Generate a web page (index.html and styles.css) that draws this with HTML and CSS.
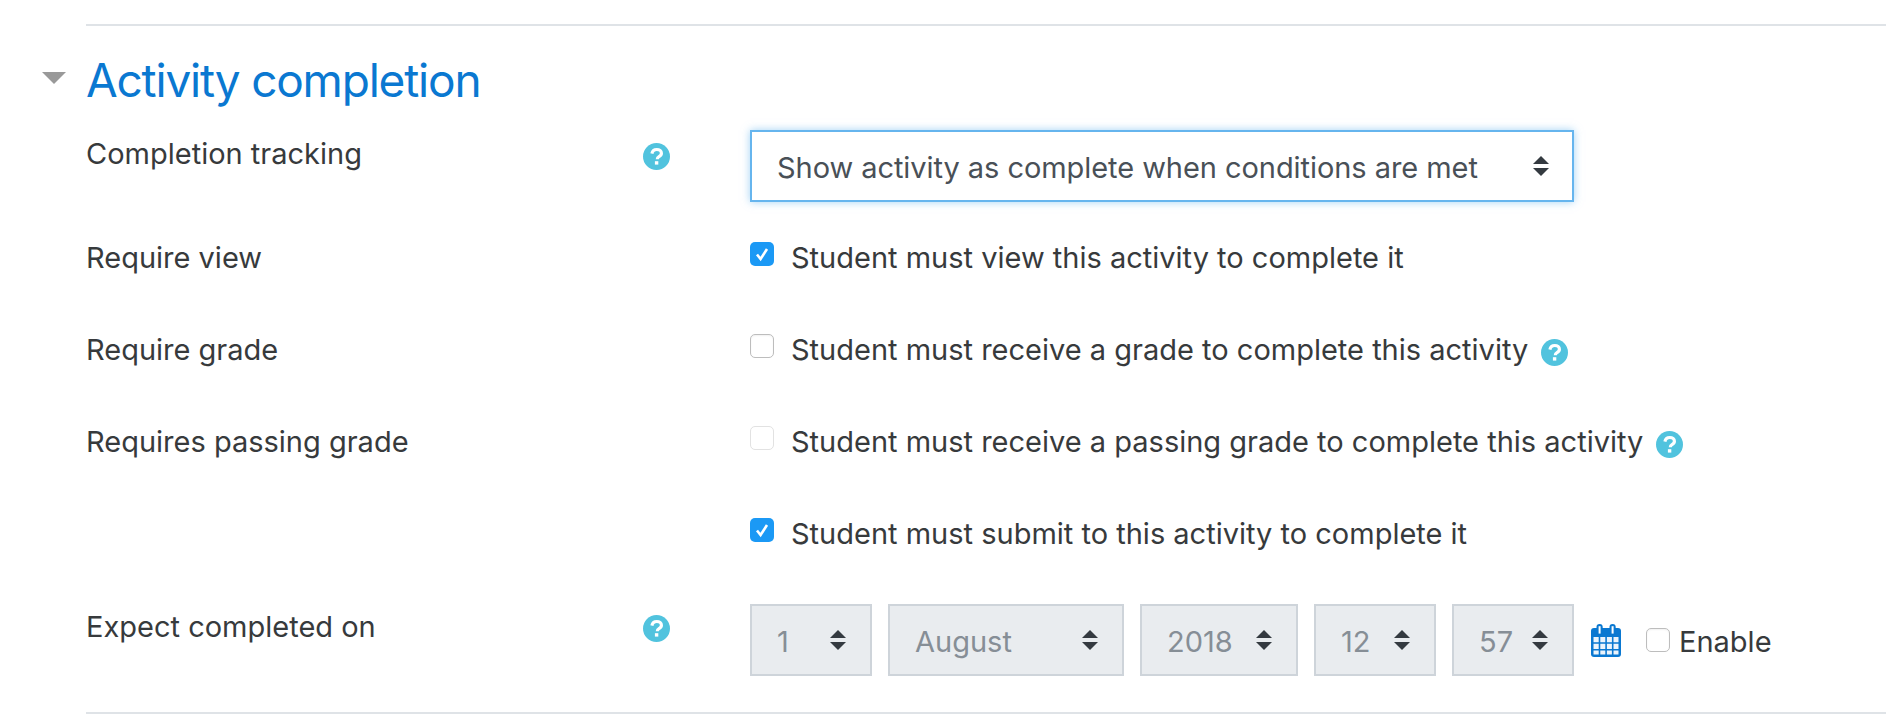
FILE: index.html
```html
<!DOCTYPE html>
<html lang="en">
<head>
<meta charset="utf-8">
<title>Activity completion</title>
<link rel="stylesheet" href="styles.css">
</head>
<body>
<svg class="defs" width="0" height="0" aria-hidden="true">
  <defs>
    <symbol id="help" viewBox="0 0 27 27">
      <circle cx="13.5" cy="13.5" r="13.5" fill="#51c3de"/>
      <path d="M8.9 10.6c.5-2.6 2.3-4.1 4.9-4.1 2.7 0 4.6 1.6 4.6 3.7 0 1.7-1 2.6-2.4 3.4-1.2.7-1.7 1.3-1.7 2.6" fill="none" stroke="#fff" stroke-width="3.2"/>
      <rect x="11.9" y="18.2" width="3.4" height="3.4" fill="#fff"/>
    </symbol>
    <symbol id="updown" viewBox="0 0 16 20">
      <path d="M8 0l8 8H0zM0 12h16l-8 8z" fill="#343a40"/>
    </symbol>
  </defs>
</svg>
<main class="page">
  <hr class="rule">
  <header class="section-head">
    <svg class="caret" viewBox="0 0 24 12" aria-hidden="true"><path d="M0 0h24L12 12z" fill="#999"/></svg>
    <h3 class="section-title">Activity completion</h3>
  </header>

  <div class="row row-select">
    <span class="label">Completion tracking</span>
    <span class="help-cell"><svg class="help"><use href="#help"/></svg></span>
    <div class="select select-focus">
      <span class="select-text">Show activity as complete when conditions are met</span>
      <svg class="updown"><use href="#updown"/></svg>
    </div>
  </div>

  <div class="row row-check">
    <span class="label">Require view</span>
    <span class="help-cell"></span>
    <label class="check-line">
      <span class="check check-on"><svg viewBox="0 0 24 24"><path d="M7 12.5l3.6 4.5L17 7" fill="none" stroke="#fff" stroke-width="2.6"/></svg></span>
      <span class="check-text">Student must view this activity to complete it</span>
    </label>
  </div>

  <div class="row row-check">
    <span class="label">Require grade</span>
    <span class="help-cell"></span>
    <label class="check-line">
      <span class="check"></span>
      <span class="check-text">Student must receive a grade to complete this activity</span>
      <svg class="help help-inline"><use href="#help"/></svg>
    </label>
  </div>

  <div class="row row-check">
    <span class="label">Requires passing grade</span>
    <span class="help-cell"></span>
    <label class="check-line">
      <span class="check check-disabled"></span>
      <span class="check-text">Student must receive a passing grade to complete this activity</span>
      <svg class="help help-inline"><use href="#help"/></svg>
    </label>
  </div>

  <div class="row row-check row-last-check">
    <span class="label"></span>
    <span class="help-cell"></span>
    <label class="check-line">
      <span class="check check-on"><svg viewBox="0 0 24 24"><path d="M7 12.5l3.6 4.5L17 7" fill="none" stroke="#fff" stroke-width="2.6"/></svg></span>
      <span class="check-text">Student must submit to this activity to complete it</span>
    </label>
  </div>

  <div class="row row-date">
    <span class="label">Expect completed on</span>
    <span class="help-cell"><svg class="help"><use href="#help"/></svg></span>
    <div class="date-controls">
      <div class="select select-disabled w-small"><span class="select-text">1</span><svg class="updown"><use href="#updown"/></svg></div>
      <div class="select select-disabled w-month"><span class="select-text">August</span><svg class="updown"><use href="#updown"/></svg></div>
      <div class="select select-disabled w-year"><span class="select-text">2018</span><svg class="updown"><use href="#updown"/></svg></div>
      <div class="select select-disabled w-small"><span class="select-text">12</span><svg class="updown"><use href="#updown"/></svg></div>
      <div class="select select-disabled w-small"><span class="select-text">57</span><svg class="updown"><use href="#updown"/></svg></div>
      <svg class="calendar" viewBox="0 0 30 33" aria-hidden="true">
        <path d="M3 4h24a3 3 0 0 1 3 3v23a3 3 0 0 1-3 3H3a3 3 0 0 1-3-3V7a3 3 0 0 1 3-3z" fill="#0a78d1"/>
        <rect x="5.5" y="0" width="6.2" height="11" rx="3" fill="#0a78d1"/>
        <rect x="18.5" y="0" width="6.2" height="11" rx="3" fill="#0a78d1"/>
        <rect x="7.6" y="2.2" width="2" height="7.4" fill="#fff"/>
        <rect x="20.6" y="2.2" width="2" height="7.4" fill="#fff"/>
        <path d="M2.5 13h5.2v5.2H2.5zM9.3 13h5v5.2h-5zM15.9 13h5v5.2h-5zM22.5 13h5v5.2h-5zM2.5 19.8h5.2V25H2.5zM9.3 19.8h5V25h-5zM15.9 19.8h5V25h-5zM22.5 19.8h5V25h-5zM2.5 26.6h5.2v4H2.5zM9.3 26.6h5v4h-5zM15.9 26.6h5v4h-5zM22.5 26.6h5v4h-5z" fill="#fff" fill-opacity=".92"/>
      </svg>
      <label class="enable">
        <span class="check"></span>
        <span class="check-text">Enable</span>
      </label>
    </div>
  </div>
  <hr class="rule rule-bottom">
</main>
</body>
</html>
```

FILE: styles.css
```css
html, body {
  margin: 0;
  padding: 0;
  background: #fff;
}
body {
  height: 726px;
  overflow: hidden;
  font-family: "Inter", "Liberation Sans", sans-serif;
  font-size: 29px;
  color: #373a3c;
}
.defs {
  position: absolute;
}
.page {
  padding: 24px 0 0 86px;
}
.rule {
  margin: 0;
  border: 0;
  height: 2px;
  background: #dfe3e7;
}
.section-head {
  display: flex;
  align-items: center;
  height: 104px;
  position: relative;
}
.caret {
  position: absolute;
  left: -44px;
  top: 46px;
  width: 24px;
  height: 12px;
}
.section-title {
  margin: 4px 0 0;
  font-size: 46px;
  font-weight: 400;
  line-height: 54px;
  letter-spacing: -1.2px;
  color: #0a78d1;
}
.row {
  display: grid;
  grid-template-columns: 557px 107px 1fr;
  align-items: start;
}
.label {
  line-height: 40px;
}
.help-cell {
  display: block;
}
.help {
  display: block;
  flex: none;
  width: 27px;
  height: 27px;
}
.row-select {
  margin-bottom: 32px;
}
.row-select .label {
  margin-top: 4px;
}
.row-select .help-cell {
  margin-top: 13px;
}
.row-check {
  height: 40px;
  margin-bottom: 52px;
}
.row-check .label {
  margin-top: 4px;
}
.row-last-check {
  margin-bottom: 54px;
}
.row-date .label {
  margin-top: 3px;
}
.row-date .help-cell {
  margin-top: 11px;
}
.select {
  display: flex;
  align-items: center;
  justify-content: space-between;
  box-sizing: border-box;
  height: 72px;
  border-width: 2px;
  border-style: solid;
}
.select-text {
  margin-top: 2px;
}
.select-focus {
  width: 824px;
  padding: 0 23px 0 25px;
  background: #fff;
  border-color: #66b5ee;
  box-shadow: 0 0 8px rgba(102, 181, 238, .6);
  color: #495057;
}
.select-focus .select-text {
  letter-spacing: -.06px;
}
.select-disabled {
  padding: 0 24px 0 25px;
  background: #e9ecef;
  border-color: #ced4da;
  color: #868e96;
}
.w-small { width: 122px; }
.w-month { width: 236px; }
.w-year { width: 158px; }
.updown {
  display: block;
  flex: none;
  width: 16px;
  height: 20px;
}
.check-line {
  display: flex;
  align-items: center;
  height: 40px;
}
.check-text {
  margin-top: 6px;
}
.check {
  flex: none;
  display: block;
  box-sizing: border-box;
  width: 24px;
  height: 24px;
  margin-right: 17px;
  border-radius: 5px;
  background: #fff;
  border: 1.5px solid #bdbdbd;
  box-shadow: inset 0 1px 2px rgba(0, 0, 0, .06);
}
.check svg {
  display: block;
  width: 24px;
  height: 24px;
}
.check-on {
  background: #1b99f5;
  border: 0;
  box-shadow: none;
}
.check-disabled {
  border-color: #e2e2e2;
  box-shadow: none;
}
.help-inline {
  margin-left: 13px;
  margin-top: 12px;
}
.date-controls {
  display: flex;
  align-items: center;
  gap: 16px;
}
.calendar {
  display: block;
  flex: none;
  width: 30px;
  height: 33px;
  margin: 0 8px 0 1px;
}
.enable {
  display: flex;
  align-items: center;
  margin-left: 1px;
}
.enable .check {
  margin-right: 9px;
}
.enable .check-text {
  margin-top: 2px;
}
.rule-bottom {
  margin-top: 36px;
}
```
